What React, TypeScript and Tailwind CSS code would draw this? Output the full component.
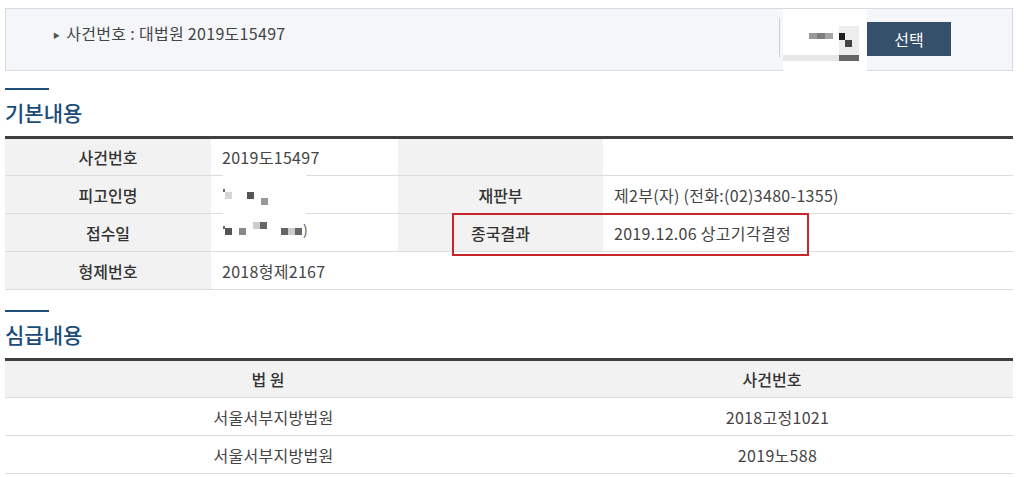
const font = { fontFamily: '"Noto Sans CJK KR", "Noto Sans", sans-serif' };

function Pix({ c, w = 7, h = 7 }: { c: string; w?: number; h?: number }) {
  return <span className="inline-block shrink-0" style={{ background: c, width: w, height: h }} />;
}

function SectionTitle({ title }: { title: string }) {
  return (
    <div className="flex flex-col">
      <div className="h-[2px] w-[44px] bg-[#1f4e7a]" />
      <h2 className="mt-[9px] text-[21px] leading-[26px] font-medium text-[#1b4b78]">{title}</h2>
    </div>
  );
}

function Th({ children, className = "" }: { children?: React.ReactNode; className?: string }) {
  return (
    <th className={`h-[38px] border-b border-[#dcdcdc] bg-[#f2f2f2] text-center text-[16px] font-medium text-[#333] ${className}`}>
      {children}
    </th>
  );
}

function Td({ children, colSpan, className = "" }: { children?: React.ReactNode; colSpan?: number; className?: string }) {
  return (
    <td colSpan={colSpan} className={`h-[38px] border-b border-[#dcdcdc] bg-white pl-[11px] text-[16px] tracking-[0.3px] text-[#444] ${className}`}>
      {children}
    </td>
  );
}

export default function App() {
  return (
    <div className="relative w-[1024px] h-[477px] overflow-hidden bg-white" style={font}>
      <div className="px-[5px] pr-[11px] pt-[8px]">
        {/* case selector bar */}
        <div className="flex h-[63px] items-start border border-[#d6dae0] bg-[#f4f6fa]">
          <div className="flex items-center pl-[47px] pt-[12px] text-[16px] tracking-[0.3px] text-[#444]">
            <span className="mr-[6px] mt-[5px] text-[7px] text-[#555]">▶</span>
            사건번호 : 대법원 2019도15497
          </div>
          {/* blurred select */}
          <div className="ml-auto flex items-start">
            <div className="mt-[9px] h-[39px] w-px bg-[#cfcfcf]" />
            <div className="ml-[3px] flex h-[66px] w-[84px] flex-col bg-white pt-[17px] pr-[8px]">
              <div className="flex h-[29px]">
                <div className="flex flex-1 justify-end pt-[7px] pr-[6px]">
                  <Pix c="#9a9a9a" w={8} h={6} />
                  <Pix c="#7f7f7f" w={8} h={6} />
                  <Pix c="#a5a5a5" w={8} h={6} />
                </div>
                <div className="flex w-[20px] flex-col bg-[#ededed] pt-[7px]">
                  <Pix c="#1e1e1e" w={6} />
                  <span className="ml-[6px] flex">
                    <Pix c="#444" w={7} h={7} />
                  </span>
                </div>
              </div>
              <div className="flex h-[6px]">
                <div className="flex-1 bg-[#e8e8e8]" />
                <div className="w-[20px] bg-[#666]" />
              </div>
            </div>
          </div>
          <div className="mr-[61px] mt-[13px] flex h-[34px] w-[84px] items-center justify-center bg-[#34506b] text-[16px] text-white">
            선택
          </div>
        </div>

        <div className="mt-[17px]">
          <SectionTitle title="기본내용" />
        </div>

        <div className="relative mt-[11px]">
          <table className="w-full table-fixed border-collapse border-t-[3px] border-[#3f3f3f]">
            <colgroup>
              <col className="w-[206px]" />
              <col className="w-[187px]" />
              <col className="w-[205px]" />
              <col />
            </colgroup>
            <tbody>
              <tr>
                <Th>사건번호</Th>
                <Td>2019도15497</Td>
                <Th />
                <Td />
              </tr>
              <tr>
                <Th>피고인명</Th>
                <Td />
                <Th>재판부</Th>
                <Td>제2부(자) (전화:(02)3480-1355)</Td>
              </tr>
              <tr>
                <Th>접수일</Th>
                <Td />
                <Th>종국결과</Th>
                <Td>2019.12.06 상고기각결정</Td>
              </tr>
              <tr>
                <Th>형제번호</Th>
                <Td colSpan={3}>2018형제2167</Td>
              </tr>
            </tbody>
          </table>
          {/* blurred name / date, masked over the cells */}
          <div className="absolute left-[218px] top-[37px] flex h-[77px] w-[83px] flex-col bg-white pt-[13px] text-[#555]">
            <div className="flex h-[14px] items-start">
              <span className="mt-[3px] flex items-end">
                <Pix c="#666" w={2} h={3} />
              </span>
              <span className="mt-[6px] flex gap-[15px]">
                <Pix c="#d6d6d6" />
                <Pix c="#555" />
              </span>
              <span className="ml-[7px]">
                <Pix c="#999" />
              </span>
            </div>
            <div className="mt-[23px] flex h-[16px] items-start">
              <span className="flex flex-col pt-[3px]">
                <Pix c="#666" w={2} h={3} />
              </span>
              <span className="mt-[5px] flex gap-[7px]">
                <Pix c="#555" />
                <Pix c="#888" />
              </span>
              <span className="ml-[7px] mt-[-1px] flex">
                <Pix c="#ccc" />
                <Pix c="#666" />
              </span>
              <span className="ml-[14px] mt-[5px] flex">
                <Pix c="#666" />
                <Pix c="#ccc" />
                <Pix c="#666" />
              </span>
              <span className="ml-[1px] -mt-[4px] text-[14px]">)</span>
            </div>
          </div>
          {/* highlight */}
          <div className="pointer-events-none absolute left-[447px] top-[77px] h-[43px] w-[357px] border-2 border-[#c8262b]" />
        </div>

        <div className="mt-[20px]">
          <SectionTitle title="심급내용" />
        </div>

        <table className="mt-[11px] w-full table-fixed border-collapse border-t-[3px] border-[#3f3f3f]">
          <colgroup>
            <col className="w-[526px]" />
            <col />
          </colgroup>
          <thead>
            <tr>
              <Th>법 원</Th>
              <Th>사건번호</Th>
            </tr>
          </thead>
          <tbody>
            {[
              ["서울서부지방법원", "2018고정1021"],
              ["서울서부지방법원", "2019노588"],
            ].map(([court, no]) => (
              <tr key={no}>
                <Td className="pl-0 text-center">{court}</Td>
                <Td className="pl-0 text-center text-[#2c4a70]">{no}</Td>
              </tr>
            ))}
          </tbody>
        </table>
      </div>
    </div>
  );
}
